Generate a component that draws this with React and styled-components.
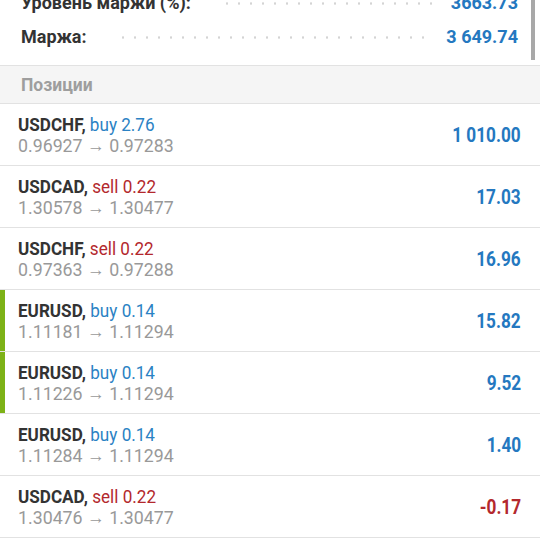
import React from "react";
import styled, { createGlobalStyle } from "styled-components";

const Global = createGlobalStyle`
  html, body { margin: 0; padding: 0; background: #fff; }
  body { font-family: Roboto, "Noto Sans", Arial, sans-serif; overflow: hidden; }
`;

const Page = styled.div`
  width: 540px;
  height: 540px;
  overflow: hidden;
  position: relative;
  background: #fff;
`;

const Summary = styled.div`
  margin-top: -15px;
  padding: 0 22px 12px 21px;
  display: flex;
  flex-direction: column;
`;

const SummaryRow = styled.div`
  display: flex;
  align-items: center;
  height: 34px;
  gap: 12px;
`;

const SumLabel = styled.span`
  font-size: 18px;
  font-weight: 700;
  color: #333;
  white-space: nowrap;
`;

const Dots = styled.span`
  flex: 1;
  height: 3px;
  margin: 3px 2px 0 18px;
  background-image: radial-gradient(circle, #d4d4d4 1px, transparent 1.3px);
  background-size: 12px 3px;
  background-repeat: repeat-x;
  background-position: 0 0;
`;

const SumValue = styled.span`
  font-size: 18px;
  font-weight: 700;
  color: #2478c0;
  white-space: nowrap;
`;

const Scrollbar = styled.div`
  position: absolute;
  right: 5px;
  top: 0;
  width: 4px;
  height: 60px;
  background: #a8a8a8;
`;

const SectionHeader = styled.div`
  height: 37px;
  display: flex;
  align-items: center;
  padding-left: 21px;
  background: #f5f5f5;
  border-top: 1px solid #e2e2e2;
  border-bottom: 1px solid #e2e2e2;
  font-size: 17.5px;
  font-weight: 700;
  color: #9e9e9e;
`;

const Row = styled.div`
  display: flex;
  align-items: center;
  justify-content: space-between;
  height: 61px;
  padding: 0 19px 0 18px;
  border-bottom: 1px solid #e2e2e2;
  box-sizing: content-box;
  box-shadow: ${(p) => (p.$marked ? "inset 5px 0 0 #7db217" : "none")};
`;

const Info = styled.div`
  display: flex;
  flex-direction: column;
  padding-top: 1px;
  flex: 1;
`;

const Title = styled.div`
  font-size: 19px;
  line-height: 21px;
  color: #333;
  transform: scaleX(0.9);
  transform-origin: left center;
  white-space: nowrap;
`;

const Symbol = styled.span`
  font-weight: 700;
`;

const Side = styled.span`
  color: ${(p) => (p.$sell ? "#b3282d" : "#2b82c4")};
`;

const Prices = styled.div`
  font-size: 19px;
  line-height: 22px;
  color: #999;
  transform: scaleX(0.935);
  transform-origin: left center;
  white-space: nowrap;
`;

const Profit = styled.div`
  font-size: 20px;
  font-weight: 700;
  transform: scaleX(0.86);
  transform-origin: right center;
  white-space: nowrap;
  color: ${(p) => (p.$neg ? "#b3282d" : "#2478c0")};
`;

const positions = [
  { sym: "USDCHF", side: "buy", vol: "2.76", from: "0.96927", to: "0.97283", p: "1 010.00" },
  { sym: "USDCAD", side: "sell", vol: "0.22", from: "1.30578", to: "1.30477", p: "17.03" },
  { sym: "USDCHF", side: "sell", vol: "0.22", from: "0.97363", to: "0.97288", p: "16.96" },
  { sym: "EURUSD", side: "buy", vol: "0.14", from: "1.11181", to: "1.11294", p: "15.82", marked: true },
  { sym: "EURUSD", side: "buy", vol: "0.14", from: "1.11226", to: "1.11294", p: "9.52", marked: true },
  { sym: "EURUSD", side: "buy", vol: "0.14", from: "1.11284", to: "1.11294", p: "1.40" },
  { sym: "USDCAD", side: "sell", vol: "0.22", from: "1.30476", to: "1.30477", p: "-0.17" },
];

export default function App() {
  return (
    <Page>
      <Global />
      <Summary>
        <SummaryRow>
          <SumLabel>Уровень маржи (%):</SumLabel>
          <Dots />
          <SumValue>3663.73</SumValue>
        </SummaryRow>
        <SummaryRow>
          <SumLabel>Маржа:</SumLabel>
          <Dots />
          <SumValue>3 649.74</SumValue>
        </SummaryRow>
      </Summary>
      <Scrollbar />
      <SectionHeader>Позиции</SectionHeader>
      {positions.map((r, i) => (
        <Row key={i} $marked={r.marked}>
          <Info>
            <Title>
              <Symbol>{r.sym},</Symbol>{" "}
              <Side $sell={r.side === "sell"}>
                {r.side} {r.vol}
              </Side>
            </Title>
            <Prices>
              {r.from} → {r.to}
            </Prices>
          </Info>
          <Profit $neg={r.p.startsWith("-")}>{r.p}</Profit>
        </Row>
      ))}
    </Page>
  );
}
